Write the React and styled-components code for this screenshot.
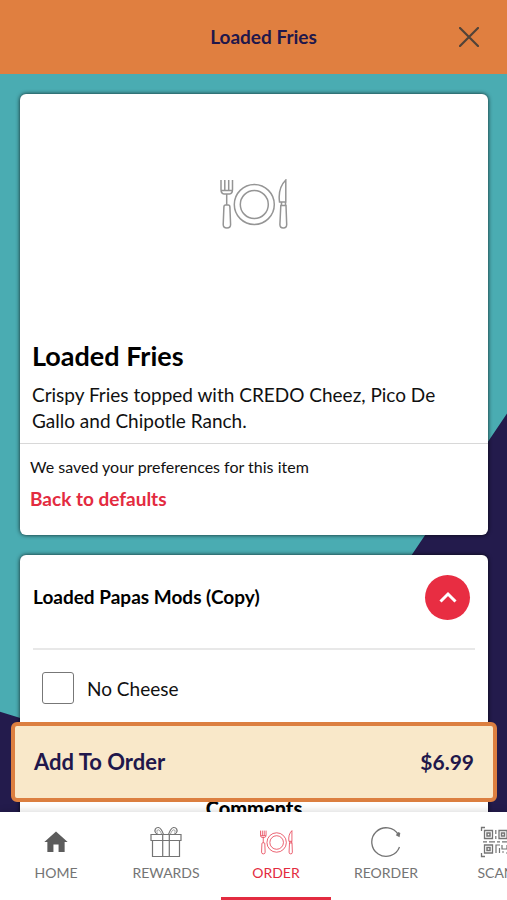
import React, { useState } from 'react'
import styled, { createGlobalStyle } from 'styled-components'

const tabs = [
  { id: 'home', label: 'HOME', Icon: HomeIcon },
  { id: 'rewards', label: 'REWARDS', Icon: GiftIcon },
  { id: 'order', label: 'ORDER', Icon: PlateIcon },
  { id: 'reorder', label: 'REORDER', Icon: ReorderIcon },
  { id: 'scan', label: 'SCAN', Icon: QrIcon },
]

function HomeIcon() {
  return (
    <svg width="28" height="28" viewBox="0 0 24 24" fill="#5c5c5c" aria-hidden="true">
      <path d="M12 3 2 12h2.6v8.5h5.2v-6.3h4.4v6.3h5.2V12H22z" />
    </svg>
  )
}

function GiftIcon() {
  return (
    <svg width="32" height="32" viewBox="0 0 32 32" fill="none" stroke="currentColor" strokeWidth="1.2" aria-hidden="true">
      <path d="M1 8.5h30v6H1zM2.5 14.5v16h27v-16M12.7 8.5v22M19.3 8.5v22" />
      <path d="M13.500 8.500C12.500 5.500 11 2 8.500 1.500C5.500 1.200 4 4.500 5.500 6.500C6.200 7.500 7 8 8 8.300M18.500 8.500C19.500 5.500 21 2 23.500 1.500C26.500 1.200 28 4.500 26.500 6.500C25.800 7.500 25 8 24 8.300" />
      <path d="M11.500 8C10.800 6 9.500 3.800 8.300 3.800C6.800 3.800 6.500 5.500 7.500 6.500M20.500 8C21.200 6 22.500 3.800 23.700 3.800C25.200 3.800 25.500 5.500 24.500 6.500" strokeWidth=".7" />
    </svg>
  )
}

function PlateIcon({ width = 33, height = 25 }) {
  return (
    <svg width={width} height={height} viewBox="0 0 68 51" fill="none" stroke="currentColor" strokeWidth="1.5" aria-hidden="true">
      <path d="M1 1v9.500q0 4 3 4.500h5.500q3-.5 3-4.500V1M4.800 1V11.500M8.700 1V11.500M1.500 11.500h10.500" />
      <path d="M6.700 15V25.500M5.500 26h2.800q1.500 0 1.600 2l.7 17.500q0 3.500-3.700 3.500t-3.700-3.500l.7-17.500q.1-2 1.600-2z" />
      <circle cx="34.300" cy="25.500" r="20" />
      <circle cx="34.300" cy="25.500" r="14" />
      <path d="M65.800 1v22h-6.300q-1.800-14 6.300-22zM61.500 23v3.500M65.500 23v3.500M60.800 26.500h5.200l.7 19q0 3.500-3.400 3.500t-3.400-3.500z" />
    </svg>
  )
}

function ReorderIcon() {
  return (
    <svg width="32" height="32" viewBox="0 0 32 32" fill="none" stroke="currentColor" strokeWidth="1.300" aria-hidden="true">
      <path d="M29.500 21A14.300 14.300 0 1 1 28.400 8.800" />
      <path d="m25.800 9.300 3.700 2 .8-4.300-2-1z" fill="currentColor" stroke="none" />
    </svg>
  )
}

function QrIcon() {
  return (
    <svg width="32" height="32" viewBox="0 0 32 32" fill="none" stroke="currentColor" aria-hidden="true">
      <path d="M1.500 5V1.500H5M27.500 1.500H31V5M1.500 27v3.500H5M27.500 30.500H31V27" strokeWidth="1.300" />
      <path d="M4.500 4.500h8v8h-8zM19 4.500h8v8h-8zM4.500 19h8v8h-8z" strokeWidth="1.300" />
      <path d="M7 7h3v3H7zM21.500 7h3v3h-3zM7 21.500h3v3H7z" strokeWidth="1.500" />
      <path d="M15.800 4v4M15.800 10v3M3 15.800h4M9 15.800h6M17 15.800h3M22 15.800h6M16 27v-8h4M19.500 22v5M22 19v4h5v-4M22 26h2M26 27h3M29.500 6v4M29.500 18v5" strokeWidth="1.200" />
    </svg>
  )
}

function App() {
  const [open, setOpen] = useState(true)
  const [noCheese, setNoCheese] = useState(false)
  const [activeTab, setActiveTab] = useState('order')

  return (
    <Screen>
      <GlobalStyle />
      <Header>
        <HeaderTitle>Loaded Fries</HeaderTitle>
        <CloseButton type="button" aria-label="Close">
          <svg width="20" height="20" viewBox="0 0 20 20" stroke="#514338" strokeWidth="2.200" strokeLinecap="round">
            <path d="m1 1 18 18M19 1 1 19" />
          </svg>
        </CloseButton>
      </Header>

      <Stage>
        <Scroller>
          <Card>
            <Hero>
              <PlateIcon width={68} height={51} />
            </Hero>
            <Info>
              <ItemName>Loaded Fries</ItemName>
              <Description>
                Crispy Fries topped with CREDO Cheez, Pico De Gallo and Chipotle Ranch.
              </Description>
            </Info>
            <Preferences>
              <p>We saved your preferences for this item</p>
              <ResetButton type="button" onClick={() => setNoCheese(false)}>Back to defaults</ResetButton>
            </Preferences>
          </Card>

          <Card>
            <ModsHeader>
              <ModsTitle>Loaded Papas Mods (Copy)</ModsTitle>
              <Toggle type="button" aria-label="Toggle options" aria-expanded={open} $open={open} onClick={() => setOpen(!open)}>
                <svg width="18" height="18" viewBox="0 0 18 18" fill="none" stroke="#fff" strokeWidth="3">
                  <path d="m1.500 12.500 7.500-7.500 7.500 7.500" />
                </svg>
              </Toggle>
            </ModsHeader>
            {open && (
              <Option>
                <input type="checkbox" checked={noCheese} onChange={(e) => setNoCheese(e.target.checked)} />
                No Cheese
              </Option>
            )}
            <Comments>Comments</Comments>
          </Card>
        </Scroller>

        <AddButton type="button">
          <span>Add To Order</span>
          <Price>$6.99</Price>
        </AddButton>
      </Stage>

      <TabBar>
        {tabs.map(({ id, label, Icon }) => (
          <Tab key={id} href={`#${id}`} $active={id === activeTab} onClick={() => setActiveTab(id)}>
            <TabIcon><Icon /></TabIcon>
            {label}
          </Tab>
        ))}
      </TabBar>
    </Screen>
  )
}

export default App

const GlobalStyle = createGlobalStyle`
  * {
    box-sizing: border-box;
  }
  body {
    margin: 0;
    font-family: Lato, "Open Sans", sans-serif;
    color: #111;
  }
  h1, h2, h3, p {
    margin: 0;
  }
  button {
    font-family: inherit;
    cursor: pointer;
  }
`

const Screen = styled.div`
  display: flex;
  flex-direction: column;
  height: 100vh;
  overflow: hidden;
`

const Header = styled.header`
  display: flex;
  align-items: center;
  height: 74px;
  padding: 0 18px 0 78px;
  background: #e07f40;
`

const HeaderTitle = styled.h1`
  flex: 1;
  padding-bottom: 2px;
  text-align: center;
  font-size: 19px;
  font-weight: 700;
  color: #21174b;
`

const CloseButton = styled.button`
  display: flex;
  align-items: center;
  justify-content: center;
  width: 40px;
  height: 40px;
  padding: 0;
  border: 0;
  background: none;
`

const Stage = styled.main`
  position: relative;
  flex: 1;
  min-height: 0;
  background: #4aacb2;

  &::before {
    content: "";
    position: absolute;
    inset: 0;
    background: #231b4c;
    clip-path: polygon(100% 46%, 50% 97%, 0 86.4%, 0 100%, 100% 100%);
  }
`

const Scroller = styled.div`
  position: relative;
  display: flex;
  flex-direction: column;
  gap: 20px;
  height: 100%;
  padding: 20px 19px 0 20px;
  overflow-y: auto;
  scrollbar-width: none;
`

const Card = styled.section`
  flex: none;
  background: #fff;
  border-radius: 6px;
  box-shadow: 0 0 4px rgba(0, 0, 0, 0.8);
`

const Hero = styled.div`
  display: flex;
  align-items: center;
  justify-content: center;
  height: 220px;
  color: #959595;
`

const Info = styled.div`
  padding: 25px 12px 9px;
  border-bottom: 1px solid #d8d8d8;
`

const ItemName = styled.h2`
  font-size: 27px;
  line-height: 34px;
  font-weight: 700;
  color: #000;
`

const Description = styled.p`
  margin-top: 9px;
  font-size: 19px;
  line-height: 26px;
`

const Preferences = styled.div`
  padding: 11px 10px 24px;
  font-size: 16px;
  line-height: 24px;
`

const ResetButton = styled.button`
  display: block;
  margin-top: 8px;
  padding: 0;
  border: 0;
  background: none;
  font-size: 19px;
  line-height: 24px;
  font-weight: 700;
  color: #e32b40;
`

const ModsHeader = styled.div`
  display: flex;
  align-items: center;
  justify-content: space-between;
  margin: 0 13px;
  padding: 20px 5px 28px 0;
  border-bottom: 2px solid #e8e8e8;
`

const ModsTitle = styled.h3`
  padding-bottom: 2px;
  font-size: 19px;
  font-weight: 700;
  color: #000;
`

const Toggle = styled.button`
  display: flex;
  align-items: center;
  justify-content: center;
  width: 45px;
  height: 45px;
  padding: 0;
  border: 0;
  border-radius: 50%;
  background: #e82d42;

  svg {
    transform: ${(props) => (props.$open ? 'none' : 'rotate(180deg)')};
  }
`

const Option = styled.label`
  display: flex;
  align-items: center;
  gap: 13px;
  padding: 22px;
  font-size: 19px;

  input {
    appearance: none;
    width: 32px;
    height: 32px;
    margin: 0;
    border: 1px solid #777;
    border-radius: 3px;
    background: #fff;
  }

  input:checked {
    background: #e82d42;
  }
`

const Comments = styled.h3`
  padding: 70px 0 40px;
  text-align: center;
  font-size: 20px;
  line-height: 24px;
  font-weight: 900;
  color: #000;
`

const AddButton = styled.button`
  position: absolute;
  left: 11px;
  right: 10px;
  bottom: 10px;
  display: flex;
  align-items: center;
  justify-content: space-between;
  height: 80px;
  padding: 0 19px 2px;
  border: 4px solid #dc7f40;
  border-radius: 6px;
  background: #f9e8c9;
  font-size: 22px;
  font-weight: 700;
  color: #21174b;
`

const Price = styled.span`
  font-size: 21px;
`

const TabBar = styled.nav`
  position: relative;
  display: flex;
  height: 88px;
  padding-left: 1px;
  overflow: hidden;
  background: #fff;
  box-shadow: 0 -2px 6px rgba(0, 0, 0, 0.12);
`

const Tab = styled.a`
  flex: 0 0 110px;
  display: flex;
  flex-direction: column;
  align-items: center;
  padding-top: 14px;
  font-size: 14px;
  line-height: 30px;
  text-decoration: none;
  color: ${(props) => (props.$active ? '#e32b40' : '#747474')};
  border-bottom: 3px solid ${(props) => (props.$active ? '#e32b40' : 'transparent')};
`

const TabIcon = styled.span`
  display: flex;
  align-items: center;
  height: 32px;
`
